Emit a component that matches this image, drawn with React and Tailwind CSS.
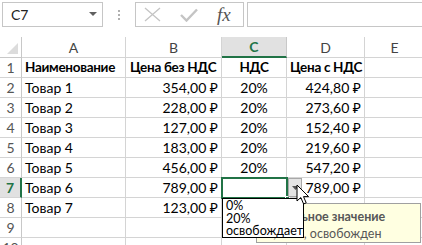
import React from "react";

const font = { fontFamily: '"Lato", "Noto Sans", "DejaVu Sans", sans-serif' };

const rows = [
  ["Наименование", "Цена без НДС", "НДС", "Цена с НДС", true],
  ["Товар 1", "354,00 ₽", "20%", "424,80 ₽"],
  ["Товар 2", "228,00 ₽", "20%", "273,60 ₽"],
  ["Товар 3", "127,00 ₽", "20%", "152,40 ₽"],
  ["Товар 4", "183,00 ₽", "20%", "219,60 ₽"],
  ["Товар 5", "456,00 ₽", "20%", "547,20 ₽"],
  ["Товар 6", "789,00 ₽", "", "789,00 ₽"],
  ["Товар 7", "123,00 ₽", "", ""],
  ["", "", "", ""],
  ["", "", "", ""],
];

function Cell({ children, className = "" }) {
  return (
    <div className={"h-[20px] border-r border-b border-[#d4d4d4] flex items-center text-black whitespace-nowrap overflow-hidden leading-none " + className}>
      {children}
    </div>
  );
}

export default function App() {
  return (
    <div className="w-[422px] h-[245px] bg-white overflow-hidden relative" style={font}>
      {/* formula bar */}
      <div className="h-[37px] flex items-start pt-[2px] pl-[2px]">
        <div className="w-[101px] h-[25px] border border-[#c6c6c6] flex items-center justify-between pl-[8px] pr-[5px]">
          <span className="text-[14px] text-[#222]">C7</span>
          <svg width="8" height="5" viewBox="0 0 8 5"><path d="M0 0h8L4 4z" fill="#606060" /></svg>
        </div>
        <div className="w-[32px] h-[25px] flex flex-col items-center justify-center gap-[2px]">
          <div className="w-[2px] h-[2px] bg-[#b0b0b0]" />
          <div className="w-[2px] h-[2px] bg-[#b0b0b0]" />
          <div className="w-[2px] h-[2px] bg-[#b0b0b0]" />
        </div>
        <div className="w-[109px] h-[25px] border border-[#c6c6c6] flex items-center pl-[8px]">
          <svg width="17" height="15" viewBox="0 0 17 15"><path d="M1 1L16 14M16 1L1 14" stroke="#c4c4c4" strokeWidth="1.3" /></svg>
          <svg className="ml-[19px]" width="18" height="14" viewBox="0 0 18 14"><path d="M1 7L6.5 12.5L17 1.5" stroke="#c4c4c4" strokeWidth="2.4" fill="none" /></svg>
          <span className="ml-[19px] text-[19px] italic text-[#555] leading-none" style={{ fontFamily: '"Liberation Serif", serif' }}>fx</span>
        </div>
        <div className="ml-[3px] flex-1 h-[25px] border border-[#c6c6c6] border-r-0" />
      </div>

      {/* sheet */}
      <div className="grid grid-cols-[22px_104px_96px_65px_78px_60px]">
        <div className="h-[21px] border-r border-b border-[#c8c8c8] relative">
          <svg className="absolute right-[3px] bottom-[3px]" width="11" height="11" viewBox="0 0 11 11"><path d="M11 0V11H0z" fill="#dcdcdc" /></svg>
        </div>
        {["A", "B", "C", "D", "E"].map((c) => (
          <div key={c} className={"h-[21px] flex items-center justify-center text-[14px] " + (c === "C" ? "bg-[#e1e1e1] border-b-2 border-b-[#217346] border-r border-r-[#c8c8c8] text-[#217346] font-bold" : "border-r border-b border-[#d4d4d4] text-[#444]")}>
            {c}
          </div>
        ))}
        {rows.map((r, i) => {
          const sel = i === 6;
          const b = r[4] ? "font-bold text-[13.5px] tracking-[-0.3px]" : "text-[14px]";
          return (
            <React.Fragment key={i}>
              <div className={"h-[20px] flex items-center justify-center text-[14px] border-b border-[#d4d4d4] " + (sel ? "bg-[#e1e1e1] text-[#217346] font-bold border-r-2 border-r-[#217346]" : "text-[#555] border-r border-r-[#c8c8c8]")}>
                {i + 1}
              </div>
              <Cell className={"pl-[3px] " + b}>{r[0]}</Cell>
              <Cell className={(r[4] ? "pl-[4px] " : "justify-end pr-[3px] ") + b}>{r[1]}</Cell>
              <Cell className={"justify-center " + b}>{r[2]}</Cell>
              <Cell className={(r[4] ? "pl-[3px] " : "justify-end pr-[3px] ") + b}>{r[3]}</Cell>
              <Cell>{""}</Cell>
            </React.Fragment>
          );
        })}
      </div>

      {/* selected cell */}
      <div className="absolute left-[221px] top-[177px] w-[67px] h-[22px] border-2 border-[#217346]" />
      <div className="absolute left-[285px] top-[196px] w-[5px] h-[5px] bg-[#217346] border border-white" />

      {/* tooltip */}
      <div className="absolute left-[256px] top-[203px] w-[165px] h-[40px] bg-[#ffffe1] border border-[#a0a0a0] pt-[4px] text-[12.5px] leading-[17px] text-[#575757] whitespace-nowrap">
        <div className="font-bold pl-[1px]">Правильное значение</div>
        <div className="-ml-[1px]">0%, 20%, освобожден</div>
      </div>

      {/* dropdown button */}
      <div className="absolute left-[288px] top-[178px] w-[14px] h-[19px] bg-[#e4e4e4] border border-[#a8a8a8] flex items-center justify-center">
        <svg width="7" height="4" viewBox="0 0 7 4"><path d="M0 0h7L3.5 4z" fill="#555" /></svg>
      </div>

      {/* dropdown list */}
      <div className="absolute left-[222px] top-[198px] w-[82px] h-[40px] bg-white border border-black overflow-hidden pl-[3px] pt-[1px] text-[12.5px] leading-[12.7px] text-black whitespace-nowrap">
        <div>0%</div>
        <div>20%</div>
        <div>освобождается</div>
      </div>

      {/* cursor */}
      <svg className="absolute left-[296px] top-[184px]" width="14" height="22" viewBox="0 0 14 22">
        <path d="M1 1V17L4.8 13.5L7.6 20L10.2 18.8L7.5 12.6H12.6Z" fill="white" stroke="black" strokeWidth="1" strokeLinejoin="round" />
      </svg>
    </div>
  );
}
